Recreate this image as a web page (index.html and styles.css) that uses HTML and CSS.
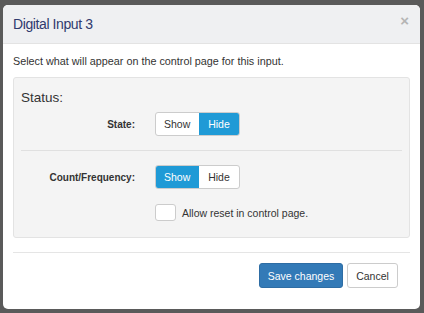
FILE: index.html
```html
<!DOCTYPE html>
<html>
<head>
<meta charset="utf-8">
<link rel="stylesheet" href="styles.css">
</head>
<body>
<div class="backdrop">
  <div class="modal">
    <div class="modal-header">
      <h4 class="modal-title">Digital Input 3</h4>
      <span class="close">×</span>
    </div>
    <div class="modal-body">
      <p class="intro">Select what will appear on the control page for this input.</p>
      <div class="well">
        <div class="section-title">Status:</div>
        <div class="row">
          <label class="row-label">State:</label>
          <div class="btn-group">
            <span class="toggle">Show</span>
            <span class="toggle active">Hide</span>
          </div>
        </div>
        <hr class="divider">
        <div class="row">
          <label class="row-label">Count/Frequency:</label>
          <div class="btn-group">
            <span class="toggle active">Show</span>
            <span class="toggle">Hide</span>
          </div>
        </div>
        <div class="row check-row">
          <span class="row-label"></span>
          <span class="checkbox"></span>
          <span class="check-label">Allow reset in control page.</span>
        </div>
      </div>
    </div>
    <div class="modal-footer">
      <button class="btn btn-primary">Save changes</button>
      <button class="btn btn-default">Cancel</button>
    </div>
  </div>
</div>
</body>
</html>
```

FILE: styles.css
```css
html, body {
  margin: 0;
  padding: 0;
  background: #5a5a5a;
  font-family: "Liberation Sans", Arial, sans-serif;
  color: #333;
}
.backdrop {
  padding: 5px 4px 0 3px;
  height: 313px;
  box-sizing: border-box;
}
.modal {
  width: 417px;
  height: 304px;
  background: #fff;
  border-radius: 5px;
  overflow: hidden;
  display: flex;
  flex-direction: column;
}
.modal-header {
  height: 39px;
  box-sizing: border-box;
  background: #eff0f2;
  border-bottom: 1px solid #e3e3e3;
  display: flex;
  align-items: center;
  justify-content: space-between;
  padding: 0 11px 0 10px;
}
.modal-title {
  margin: 0;
  font-size: 14px;
  letter-spacing: -0.4px;
  font-weight: normal;
  color: #2f3a6e;
}
.close {
  color: #b5b5b5;
  font-size: 15px;
  font-weight: bold;
  margin-top: -8px;
}
.modal-body {
  padding: 10px 10px 0 10px;
}
.intro {
  margin: 0 0 9px 0;
  font-size: 10.8px;
  line-height: 14px;
}
.well {
  background: #f4f4f4;
  border: 1px solid #e3e3e3;
  border-radius: 3px;
  height: 161px;
  box-sizing: border-box;
  padding: 11px 7px 0 7px;
}
.section-title {
  font-size: 13.5px;
  line-height: 18px;
  margin-bottom: 5px;
}
.row {
  display: flex;
  align-items: center;
}
.row-label {
  width: 114px;
  text-align: right;
  font-weight: bold;
  font-size: 10px;
  margin-right: 20px;
}
.btn-group {
  display: flex;
  border-radius: 3px;
  border: 1px solid #ccc;
  overflow: hidden;
  background: #fff;
}
.toggle {
  font-size: 10.5px;
  height: 22px;
  line-height: 22px;
  padding: 0 8px;
  color: #333;
}
.toggle:first-child {
  width: 27px;
}
.toggle:last-child {
  width: 24px;
  text-align: center;
}
.toggle.active {
  background: #1f9ad6;
  color: #fff;
}
.divider {
  border: 0;
  border-top: 1px solid #e0e0e0;
  margin: 14px 0 14px 0;
}
.check-row {
  margin-top: 15px;
}
.checkbox {
  width: 19px;
  height: 15px;
  border: 1px solid #ccc;
  border-radius: 3px;
  background: #fff;
  margin-right: 6px;
}
.check-label {
  font-size: 10.5px;
  color: #333;
}
.modal-footer {
  margin: 14px 10px 0 10px;
  border-top: 1px solid #e5e5e5;
  display: flex;
  justify-content: flex-end;
  padding: 10px 12px 0 0;
  gap: 4px;
}
.btn {
  font-family: "Liberation Sans", Arial, sans-serif;
  font-size: 10.5px;
  height: 25px;
  border-radius: 3px;
  padding: 0;
  border: 1px solid #ccc;
  background: #fff;
  color: #333;
  white-space: nowrap;
  box-sizing: border-box;
}
.btn-primary {
  background: #337ab7;
  border-color: #2e6da4;
  color: #fff;
  width: 84px;
}
.btn-default {
  width: 51px;
}
```
